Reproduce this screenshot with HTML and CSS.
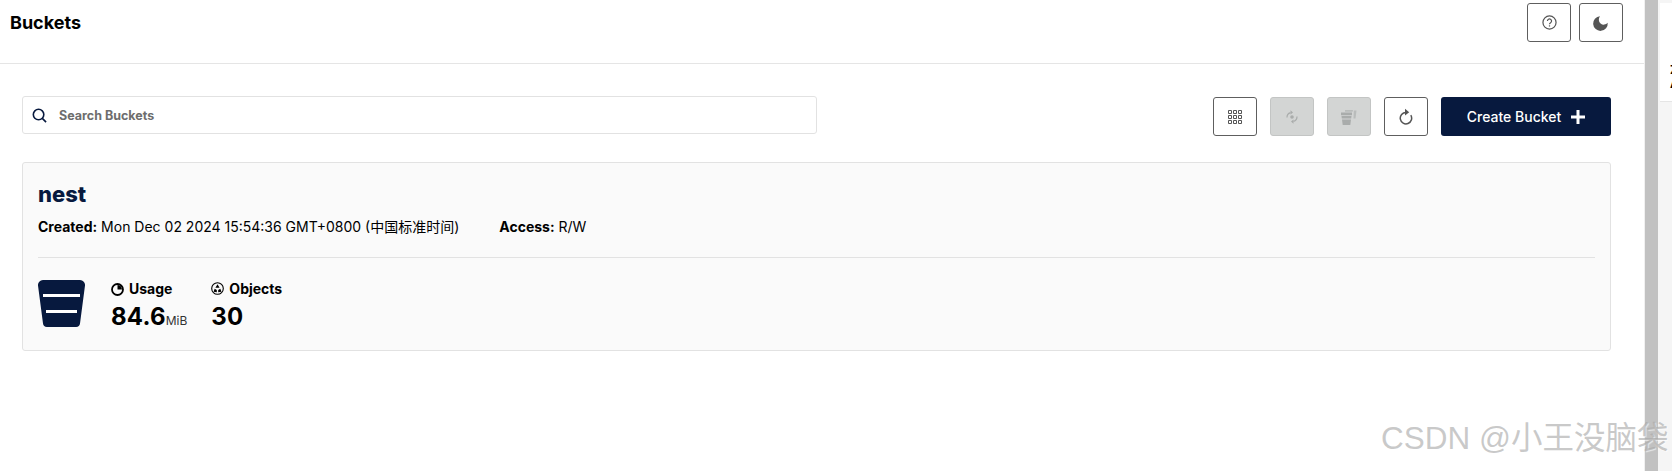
FILE: index.html
```html
<!DOCTYPE html>
<html lang="en">
  <head>
    <meta charset="UTF-8" />
    <title>Buckets</title>
    <link rel="stylesheet" href="styles.css">
  </head>
  <body>
    <div class="page">
      <main class="main">
        <header class="topbar">
          <h1 class="page-title">Buckets</h1>
          <div class="topbar-btns">
            <button class="icon-btn" type="button">
              <svg width="15" height="15" viewBox="0 0 16 16" fill="none" stroke="#555" stroke-width="1.300"><circle cx="8" cy="8" r="7"/><path d="M5.800 6.300a2.200 2.200 0 1 1 3.400 1.900c-.8.500-1.200.9-1.200 1.700"/><path d="M8 11v1.300"/></svg>
            </button>
            <button class="icon-btn" type="button">
              <svg width="18" height="18" viewBox="0 0 16 16" fill="#555"><path d="M7.130 2.010A6.500 6.500 0 1 0 13.970 7.870 4.500 4.500 0 0 1 7.130 2.010z"/></svg>
            </button>
          </div>
        </header>

        <section class="content">
          <div class="toolbar">
            <label class="search">
              <svg width="15" height="15" viewBox="0 0 16 16" fill="none" stroke="#07193e" stroke-width="1.700"><circle cx="7" cy="7" r="5.600"/><path d="M11 11l4 4"/></svg>
              <input class="search-input" type="text" placeholder="Search Buckets" />
            </label>
            <div class="actions">
              <button class="icon-btn" type="button">
                <svg width="14" height="14" viewBox="0 0 14 14" fill="none" stroke="#555" stroke-width="1"><path d="M.5.5h3v3h-3zM5.500.5h3v3h-3zM10.500.5h3v3h-3zM.5 5.500h3v3h-3zM5.500 5.500h3v3h-3zM10.500 5.500h3v3h-3zM.5 10.500h3v3h-3zM5.500 10.500h3v3h-3zM10.500 10.500h3v3h-3z"/></svg>
              </button>
              <button class="icon-btn disabled" type="button" disabled>
                <svg width="12" height="14" viewBox="0 0 12 14" fill="none" stroke="#a9acab" stroke-width="1.200"><path d="M1 7.500A5 5 0 0 1 4.500 2.600M11 6.500A5 5 0 0 1 7.500 11.400"/><path d="M4.500.3v4.200L7 2.400zM7.500 13.700V9.500L5 11.600z" fill="#a9acab" stroke="none"/><circle cx="6" cy="7" r="1.800" fill="#a9acab" stroke="none"/></svg>
              </button>
              <button class="icon-btn disabled" type="button" disabled>
                <svg width="16" height="16" viewBox="0 0 16 16"><path d="M4 1h8l-.4 1.800H4zM12.800 1.500h2.700l-1 8h-2z" fill="#b9bcbb"/><path d="M0 3.500h11v2.700H0zM.5 7h10l-.3 2.500H.8zM1 10.500h9L9.300 16H1.700z" fill="#a9acab"/></svg>
              </button>
              <button class="icon-btn" type="button">
                <svg width="14" height="17" viewBox="0 0 14 17" fill="none" stroke="#555" stroke-width="1.500"><path d="M7 4.500A5.700 5.700 0 1 0 11.800 7.200"/><path d="M6 .8l4.200 3.500L6 7.600z" fill="#555" stroke="none"/></svg>
              </button>
              <button class="primary-btn" type="button">
                Create Bucket
                <svg width="14" height="14" viewBox="0 0 14 14" fill="#fff"><path d="M5.500 0h3v5.500H14v3H8.500V14h-3V8.500H0v-3h5.500z"/></svg>
              </button>
            </div>
          </div>

          <article class="bucket-card">
            <h2 class="bucket-name">nest</h2>
            <div class="bucket-meta">
              <span><b>Created:</b> Mon Dec 02 2024 15:54:36 GMT+0800 (中国标准时间)</span>
              <span><b>Access:</b> R/W</span>
            </div>
            <hr class="divider" />
            <div class="bucket-stats">
              <svg class="bucket-icon" width="47" height="47" viewBox="0 0 47 47">
                <path d="M5 0h37a5 5 0 0 1 5 5.500l-5 38a4 4 0 0 1-4 3.500H9a4 4 0 0 1-4-3.500L0 5.500A5 5 0 0 1 5 0z" fill="#07193e"/>
                <path d="M5 14h37v3H5zM8 30h31v3H8z" fill="#fff"/>
              </svg>
              <div class="stat stat-usage">
                <div class="stat-label">
                  <svg width="13" height="13" viewBox="0 0 13 13"><circle cx="6.500" cy="6.500" r="5.500" fill="none" stroke="#000" stroke-width="1.800"/><path d="M6.500 2v4.500H11A4.500 4.500 0 0 0 6.500 2z" fill="#000"/></svg>
                  Usage
                </div>
                <div class="stat-value">84.6<span class="stat-unit">MiB</span></div>
              </div>
              <div class="stat">
                <div class="stat-label">
                  <svg class="objects-icon" width="13" height="13" viewBox="0 0 13 13"><circle cx="6.500" cy="6.500" r="5.800" fill="none" stroke="#000" stroke-width="1.100"/><path d="M6.500 2.200L8.600 5.700H4.400zM2.500 9.800L3.700 6.700l2.100 1.200V10.300zM10.500 9.800L9.300 6.700 7.200 7.900V10.300z" fill="#000"/></svg>
                  Objects
                </div>
                <div class="stat-value">30</div>
              </div>
            </div>
          </article>
        </section>
      </main>

      <div class="scrollbar"></div>
      <aside class="side-strip">
        <div class="side-panel"><span class="side-glyph">Z<br />A</span></div>
      </aside>
    </div>
    <div class="watermark">CSDN @小王没脑袋</div>
  </body>
</html>
```

FILE: styles.css
```css
* {
  box-sizing: border-box;
}
html,
body {
  height: 100%;
  margin: 0;
  overflow: hidden;
}
body {
  font-family: Inter, "Noto Sans CJK SC", sans-serif;
  color: #000;
  background: #fff;
}
.page {
  display: flex;
  height: 471px;
}
.main {
  width: 1645px;
  flex: none;
  border-right: 1px solid #f0f0f0;
}
.topbar {
  height: 64px;
  padding: 3px 21px 0 10px;
  display: flex;
  justify-content: space-between;
  align-items: flex-start;
  border-bottom: 1px solid #e5e5e5;
}
.page-title {
  margin: 8px 0 0;
  font-size: 18px;
  line-height: 24px;
  font-weight: 700;
}
.topbar-btns {
  display: flex;
  gap: 8px;
}
.icon-btn {
  width: 44px;
  height: 39px;
  padding: 0;
  display: flex;
  align-items: center;
  justify-content: center;
  background: #fff;
  border: 1px solid #5e5e5e;
  border-radius: 3px;
}
.icon-btn.disabled {
  background: #d3d5d4;
  border-color: #c3c5c4;
}
.content {
  padding: 32px 33px 0 22px;
}
.toolbar {
  display: flex;
  justify-content: space-between;
  align-items: flex-start;
}
.search {
  width: 795px;
  height: 38px;
  padding-left: 9px;
  display: flex;
  align-items: center;
  gap: 10px;
  background: #fff;
  border: 1px solid #e2e2e2;
  border-radius: 3px;
}
.search-input {
  flex: 1;
  border: none;
  outline: none;
  background: transparent;
  font-family: inherit;
  font-size: 12.5px;
  font-weight: 700;
}
.search-input::placeholder {
  color: #6d6d6d;
  opacity: 1;
}
.actions {
  display: flex;
  gap: 13px;
  margin-top: 1px;
}
.primary-btn {
  width: 170px;
  height: 39px;
  display: flex;
  align-items: center;
  justify-content: center;
  gap: 10px;
  color: #fff;
  background: #07193e;
  border: none;
  border-radius: 3px;
  font-family: inherit;
  font-size: 14px;
  font-weight: 500;
}
.bucket-card {
  height: 189px;
  margin-top: 26px;
  padding: 18px 15px 0;
  background: #fafafa;
  border: 1px solid #e2e2e2;
  border-radius: 3px;
}
.bucket-name {
  margin: 0;
  font-size: 22px;
  line-height: 27px;
  font-weight: 800;
  color: #07193e;
}
.bucket-meta {
  margin-top: 9px;
  display: flex;
  gap: 40px;
  font-size: 14px;
  line-height: 20px;
}
.divider {
  margin: 20px 0 0;
  border: none;
  border-top: 1px solid #e2e2e2;
}
.bucket-stats {
  margin-top: 22px;
  display: flex;
  align-items: flex-start;
}
.bucket-icon {
  margin-right: 26px;
}
.stat-usage {
  margin-right: 24px;
}
.stat-label {
  display: flex;
  align-items: center;
  gap: 5px;
  font-size: 14px;
  line-height: 18px;
  font-weight: 700;
}
.objects-icon {
  margin-top: -2px;
}
.stat-value {
  margin-top: 4px;
  font-size: 24px;
  line-height: 30px;
  font-weight: 700;
  letter-spacing: 0.2px;
}
.stat-unit {
  font-size: 12px;
  font-weight: 400;
  color: #333;
  letter-spacing: 0;
}
.scrollbar {
  width: 13px;
  flex: none;
  background: #c1c1c1;
}
.side-strip {
  flex: 1;
  background: #f5f5f5;
  padding: 3px 0 0 2px;
}
.side-panel {
  height: 99px;
  background: #fff;
  border-bottom: 1px solid #e5e5e5;
  overflow: hidden;
  padding: 60px 0 0 10px;
}
.side-glyph {
  display: block;
  font-size: 12px;
  line-height: 14px;
  font-weight: 700;
}
.watermark {
  position: absolute;
  left: 1381px;
  top: 420px;
  font-family: "Liberation Sans", "Noto Sans CJK SC", sans-serif;
  font-size: 31.5px;
  line-height: 36px;
  white-space: nowrap;
  color: rgba(165, 165, 165, 0.6);
  text-shadow: 1px 1px 1px rgba(255, 255, 255, 0.6);
}
```
